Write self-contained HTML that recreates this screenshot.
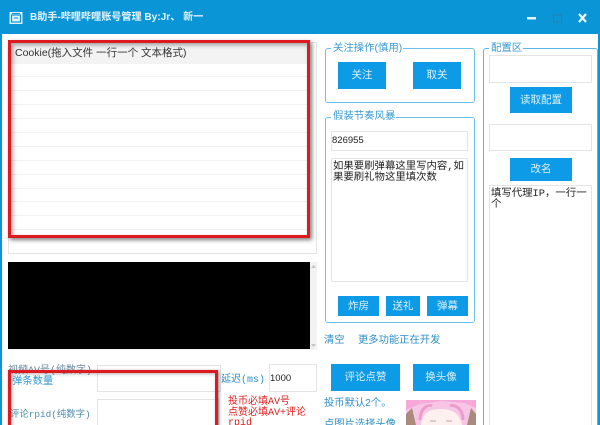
<!DOCTYPE html>
<html><head><meta charset="utf-8"><style>
html,body{margin:0;padding:0;background:#fff}
#w{position:relative;width:600px;height:425px;overflow:hidden;background:#fff;font-family:"Liberation Sans","Noto Sans CJK SC",sans-serif;font-size:10.5px;color:#222}
#w div{position:absolute;box-sizing:border-box}
.b{background:#0d9ae6;color:#dff2fc;text-align:center;font-size:10.5px}
.i{background:#fff;border:1px solid #e4e4e4}
.g{border:1px solid #6cc0ea;border-radius:3px}
.l{background:#fff;color:#3a9ad0;padding:0 1px 0 2px;font-size:10.4px;line-height:14px;white-space:nowrap}
.r{left:9px;width:300px;height:1px;background:#f0f2f5}
.t{white-space:nowrap;line-height:14px}
.m{font-family:"Liberation Mono","Noto Sans CJK SC",monospace;font-size:10px}
.red{position:absolute;border:3px solid #dd1a1f;box-shadow:2px 2px 4px rgba(0,0,0,.5),inset 2px 2px 4px rgba(0,0,0,.35)}
</style></head><body><div id="w">
<div style="left:0;top:0;width:600px;height:34px;background:#0a96d6"></div>
<div style="left:0;top:34px;width:2px;height:391px;background:#0a96d6"></div>
<div style="left:598px;top:34px;width:2px;height:391px;background:#0a96d6"></div>
<svg style="position:absolute;left:9px;top:11px" width="14" height="14" viewBox="0 0 14 14"><rect x=".5" y="1" width="13" height="12" fill="#dff1fb"/><rect x="2.5" y="4" width="9" height="7" fill="none" stroke="#0a96d6" stroke-width="1.2"/><path d="M3 2.5h8M5 7h4" stroke="#0a96d6" stroke-width="1"/></svg>
<div class="t" style="left:30px;top:11px;color:#e4f4fc;font-size:10.1px;font-weight:bold">B助手-哔哩哔哩账号管理 By:Jr、 新一</div>
<svg style="position:absolute;left:520px;top:10px" width="80" height="16" viewBox="0 0 80 16"><rect x="7" y="7" width="9" height="2.5" fill="#e4f4fc"/><rect x="33.5" y="5" width="8" height="7" fill="none" stroke="#2383b8" stroke-width="1.2"/><path d="M59 4l7 8M66 4l-7 8" stroke="#eef8fd" stroke-width="2.2"/></svg>

<div class="i" style="left:8px;top:42px;width:309px;height:212px"></div>
<div style="left:9px;top:43px;width:300px;height:21px;background:#f3f3f3"></div>
<div class="t" style="left:15px;top:46px;font-size:10.5px;color:#333">Cookie(拖入文件 一行一个 文本格式)</div>
<div class="r" style="top:76px"></div><div class="r" style="top:90px"></div><div class="r" style="top:104px"></div><div class="r" style="top:118px"></div><div class="r" style="top:132px"></div><div class="r" style="top:146px"></div><div class="r" style="top:160px"></div><div class="r" style="top:174px"></div><div class="r" style="top:188px"></div><div class="r" style="top:201px"></div><div class="r" style="top:215px"></div><div class="r" style="top:229px"></div>
<div class="red" style="left:8px;top:40px;width:302px;height:198px"></div>

<div style="left:8px;top:262px;width:309px;height:88px;background:#f2f2f2"></div>
<div style="left:8px;top:262px;width:302px;height:87px;background:#000"></div>
<svg style="position:absolute;left:310px;top:263px" width="7" height="87" viewBox="0 0 7 87"><path d="M1 5l2.500-3 2.500 3zM1 81l2.500 3 2.500-3z" fill="#c4c4c4"/></svg>

<div class="g" style="left:325px;top:48px;width:150px;height:55px"></div>
<div class="l" style="left:331px;top:42px">关注操作(慎用)</div>
<div class="b" style="left:338px;top:62px;width:48px;height:27px;line-height:27px">关注</div>
<div class="b" style="left:413px;top:62px;width:48px;height:27px;line-height:27px">取关</div>

<div class="g" style="left:325px;top:117px;width:150px;height:206px"></div>
<div class="l" style="left:331px;top:110px">假装节奏风暴</div>
<div class="i" style="left:331px;top:131px;width:137px;height:20px;font-size:9.5px;line-height:18px;color:#222">826955</div>
<div class="i m" style="left:331px;top:158px;width:137px;height:124px;font-size:10.4px;line-height:11px;padding:3px 0 0 1px;color:#222;white-space:nowrap">如果要刷弹幕这里写内容,如<br>果要刷礼物这里填次数</div>
<div class="b" style="left:338px;top:296px;width:41px;height:20px;line-height:20px">炸房</div>
<div class="b" style="left:386px;top:296px;width:34px;height:20px;line-height:20px">送礼</div>
<div class="b" style="left:427px;top:296px;width:41px;height:20px;line-height:20px">弹幕</div>

<div class="g" style="left:483px;top:48px;width:115px;height:380px;border-color:#5ab6e6"></div>
<div class="l" style="left:489px;top:42px">配置区</div>
<div class="i" style="left:489px;top:55px;width:103px;height:28px"></div>
<div class="b" style="left:510px;top:87px;width:62px;height:26px;line-height:26px">读取配置</div>
<div class="i" style="left:489px;top:124px;width:103px;height:27px"></div>
<div class="b" style="left:510px;top:158px;width:62px;height:23px;line-height:23px">改名</div>
<div class="i m" style="left:489px;top:185px;width:103px;height:245px;font-size:10.4px;line-height:11px;padding:3px 0 0 1px;color:#222;white-space:nowrap">填写代理IP，一行一<br>个</div>

<div class="t" style="left:324px;top:334px;color:#2f8fc8;font-size:10.3px">清空</div>
<div class="t" style="left:358px;top:334px;color:#2f8fc8;font-size:10.3px">更多功能正在开发</div>

<div class="t m" style="left:8px;top:365px;color:#6b8aa0">视频AV号(纯数字)</div>
<div class="t" style="left:12px;top:375px;color:#2f9ad0;font-size:10.3px">弹条数量</div>
<div class="t m" style="left:10px;top:408px;color:#4a8ca8;font-size:9.4px">评论rpid(纯数字)</div>
<div class="i" style="left:97px;top:365px;width:124px;height:27px"></div>
<div class="i" style="left:97px;top:399px;width:122px;height:30px"></div>
<div class="red" style="left:8px;top:370px;width:210px;height:70px;box-shadow:1px 1px 3px rgba(0,0,0,.5),inset 1px 1px 3px rgba(0,0,0,.3)"></div>
<div class="t m" style="left:221px;top:374px;color:#2f8fc8">延迟(ms)</div>
<div class="i" style="left:269px;top:364px;width:48px;height:28px;line-height:28px;font-size:9.500px">1000</div>
<div class="t m" style="left:228px;top:398px;color:#e01b1b;line-height:10.500px">投币必填AV号<br>点赞必填AV+评论<br>rpid</div>
<div class="b" style="left:331px;top:364px;width:69px;height:27px;line-height:27px">评论点赞</div>
<div class="b" style="left:413px;top:364px;width:56px;height:27px;line-height:27px">换头像</div>
<div class="t" style="left:324px;top:397px;color:#2f8fc8;font-size:10.3px">投币默认2个。</div>
<div class="t" style="left:324px;top:418px;color:#2f8fc8;font-size:10.3px">点图片选择头像</div>
<svg style="position:absolute;left:406px;top:400px" width="70" height="25" viewBox="0 0 70 25"><rect width="70" height="25" fill="#f7c6e6"/><path d="M0 0h70v8L58 3 36 1 14 4 0 10z" fill="#f4a9d8"/><path d="M0 14l6-6 4 17H0zM70 14l-5-6-4 17h9z" fill="#a98a7c"/><path d="M15 25c1-12 8-16 20-16s19 5 21 16z" fill="#fdf0ee"/><path d="M14 20C14 8 22 4 26 6M57 20C57 8 48 4 44 6" fill="none" stroke="#ec9ccc" stroke-width="3"/><path d="M24 21h6M40 21h6" stroke="#c9a4a4" stroke-width="1"/></svg>
</div></body></html>
